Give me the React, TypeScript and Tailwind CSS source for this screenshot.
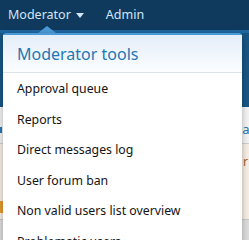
import React from "react";

export default function App() {
  const items = [
    "Approval queue",
    "Reports",
    "Direct messages log",
    "User forum ban",
    "Non valid users list overview",
    "Problematic users",
  ];
  return (
    <div
      className="relative w-[249px] h-[240px] overflow-hidden bg-[#dcdcdc]"
      style={{ fontFamily: '"Noto Sans", "Open Sans", sans-serif' }}
    >
      {/* page background */}
      <div className="h-[30px] bg-[#0f3a5e] flex items-center pl-[8px] text-[12.5px] text-[#d2e5f7]">
        <span>Moderator</span>
        <span className="ml-[5px] w-0 h-0 border-l-[4px] border-r-[4px] border-t-[5px] border-l-transparent border-r-transparent border-t-[#d2e5f7]" />
        <span className="ml-[22px]">Admin</span>
      </div>
      <div className="h-[3px] bg-[#1f66a0]" />
      <div className="h-[74px] bg-[#175584]" />
      <div className="h-[36px] bg-[#f2f2f2] flex items-center justify-between pt-[9px]">
        <span className="w-[2px] h-[6px] bg-[#2577b1]" />
        <span className="-mr-[4px] text-[13px] leading-none text-[#2577b1]">al</span>
      </div>
      <div className="h-[1px] bg-[#cfcfcf]" />
      <div className="h-[75px] bg-[#f6ede3] flex flex-col justify-between pt-[12px] pb-[6px]">
        <span className="self-end mr-[1px] text-[12px] leading-none text-[#a0612a]">r</span>
        <span className="w-[3px] h-[12px] bg-[#e39a2e]" />
      </div>
      <div className="h-[1px] bg-[#c8c8c8]" />

      {/* dropdown arrow */}
      <div className="absolute left-[38px] top-[26px] w-0 h-0 border-l-[9px] border-r-[9px] border-b-[7px] border-l-transparent border-r-transparent border-b-[#4a9ad8]" />

      {/* dropdown */}
      <div className="absolute left-[3px] top-[33px] w-[239px] h-[220px] bg-white rounded-t-[3px] shadow-[0_2px_6px_rgba(0,0,0,0.3)] border-t-[2px] border-[#4a9ad8]">
        <div className="h-[38px] flex items-center pl-[14px] text-[16px] text-[#2577b1] bg-gradient-to-b from-[#e4eef9] to-[#fbfdff] border-b border-[#dde3ea]">
          Moderator tools
        </div>
        <div className="pt-[1px]">
          {items.map((t) => (
            <div key={t} className="h-[30.5px] flex items-center pl-[14px] text-[12.3px] text-[#141414]">
              {t}
            </div>
          ))}
        </div>
      </div>
    </div>
  );
}
